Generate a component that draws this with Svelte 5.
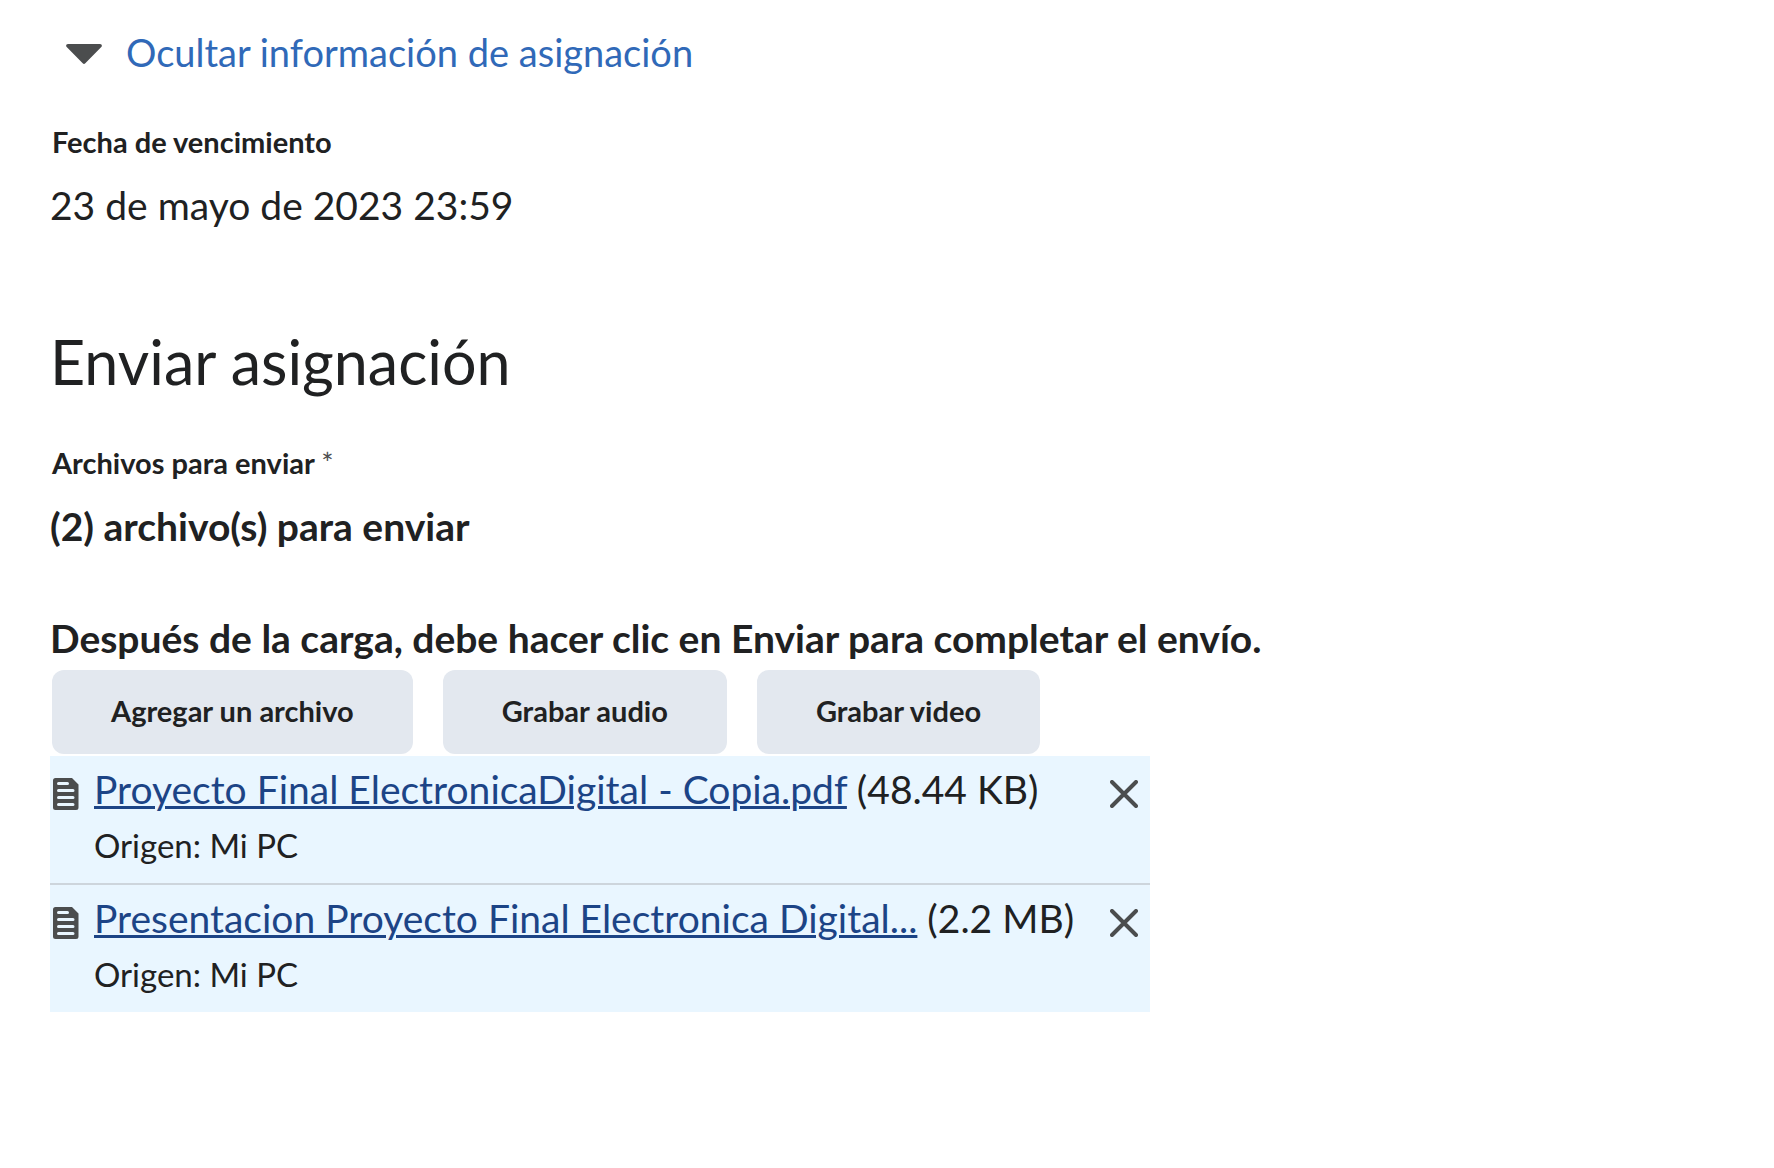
<script>
  const actions = ['Agregar un archivo', 'Grabar audio', 'Grabar video'];
  let open = $state(true);
  let files = $state([
    { name: 'Proyecto Final ElectronicaDigital - Copia.pdf', size: '48.44 KB', origin: 'Mi PC' },
    { name: 'Presentacion Proyecto Final Electronica Digital...', size: '2.2 MB', origin: 'Mi PC' }
  ]);
</script>

<main>
  <button class="toggle" aria-expanded={open} onclick={() => (open = !open)}>
    <svg class="caret" class:closed={!open} viewBox="0 0 36 24" aria-hidden="true">
      <path d="M2 4h32c1.800 0 2.400 1.800 1.300 3L19.300 23.300a1.800 1.800 0 0 1-2.600 0L.7 7C-.4 5.800.2 4 2 4z" />
    </svg>
    <span>Ocultar información de asignación</span>
  </button>

  {#if open}
    <section class="due">
      <h3>Fecha de vencimiento</h3>
      <p>23 de mayo de 2023 23:59</p>
    </section>
  {/if}

  <h2>Enviar asignación</h2>

  <section class="submit">
    <h3>Archivos para enviar <span class="required">*</span></h3>
    <p class="strong">({files.length}) archivo(s) para enviar</p>
    <p class="strong notice">Después de la carga, debe hacer clic en Enviar para completar el envío.</p>

    <div class="actions">
      {#each actions as action}
        <button class="action">{action}</button>
      {/each}
    </div>

    <ul>
      {#each files as file (file.name)}
        <li>
          <svg class="doc" viewBox="0 0 26 32" aria-hidden="true">
            <path class="sheet" d="M2.500 0H19l6.500 6.500v23A2.500 2.500 0 0 1 23 32H2.500A2.500 2.500 0 0 1 0 29.500v-27A2.500 2.500 0 0 1 2.500 0z" />
            <path class="lines" d="M5.500 5.500h9M5.500 12.500h14.500M5.500 19.500h14.500M5.500 26.500h14.500" />
          </svg>
          <div class="info">
            <div class="name"><a href="#archivo">{file.name}</a> ({file.size})</div>
            <div class="origin">Origen: {file.origin}</div>
          </div>
          <button
            class="remove"
            aria-label="Eliminar {file.name}"
            onclick={() => (files = files.filter((f) => f !== file))}
          >
            <svg viewBox="0 0 28 28" aria-hidden="true"><path d="M2 2l24 24M26 2L2 26" /></svg>
          </button>
        </li>
      {/each}
    </ul>
  </section>
</main>

<style>
  :global(body) {
    margin: 0;
    background: #fff;
  }
  main {
    padding: 26px 50px;
    color: #202122;
    font-family: Lato, 'Liberation Sans', sans-serif;
    font-size: 39px;
    line-height: 52px;
  }
  h2,
  h3,
  p,
  ul {
    margin: 0;
    padding: 0;
  }
  button {
    border: 0;
    color: inherit;
    font-family: inherit;
    cursor: pointer;
  }
  .toggle {
    display: flex;
    align-items: center;
    gap: 24px;
    padding: 0 16px;
    background: none;
    color: #3069b8;
    font-size: 38px;
    line-height: 52px;
  }
  .caret {
    width: 36px;
    height: 24px;
    fill: #4b4d4e;
  }
  .closed {
    transform: rotate(-90deg);
  }
  .due {
    padding-top: 44px;
  }
  h3 {
    padding: 0 2px 17px;
    font-size: 29px;
    line-height: 40px;
    font-weight: 700;
  }
  h2 {
    padding: 91px 0 41px;
    font-size: 61px;
    line-height: 80px;
    font-weight: 400;
  }
  .required {
    color: #4b4d4e;
    font-weight: 400;
  }
  .strong {
    font-weight: 700;
  }
  .notice {
    padding-top: 60px;
  }
  .actions {
    display: flex;
    flex-wrap: wrap;
    gap: 30px;
    padding: 6px 2px 2px;
  }
  .action {
    padding: 19px 59px 21px;
    border-radius: 12px;
    background: #e3e8ef;
    font-size: 29px;
    line-height: 44px;
    font-weight: 700;
  }
  ul {
    max-width: 1100px;
    list-style: none;
    background: #e9f6ff;
  }
  li {
    display: flex;
    align-items: flex-start;
    padding: 7px 12px 16px 3px;
  }
  li + li {
    border-top: 2px solid #cdd5dc;
  }
  .doc {
    flex: none;
    width: 26px;
    height: 32px;
    margin: 15px 15px 0 0;
  }
  .sheet {
    fill: #4b4d4e;
  }
  .lines {
    stroke: #e9f6ff;
    stroke-width: 3;
    stroke-linecap: round;
  }
  .info {
    flex: 1;
  }
  a {
    color: #1c4486;
    text-decoration-thickness: 3px;
  }
  .origin {
    padding-top: 8px;
    font-size: 33px;
    line-height: 44px;
  }
  .remove {
    display: flex;
    margin-top: 17px;
    padding: 0;
    background: none;
  }
  .remove svg {
    width: 28px;
    height: 28px;
    fill: none;
    stroke: #4b4d4e;
    stroke-width: 4;
    stroke-linecap: round;
  }
</style>
